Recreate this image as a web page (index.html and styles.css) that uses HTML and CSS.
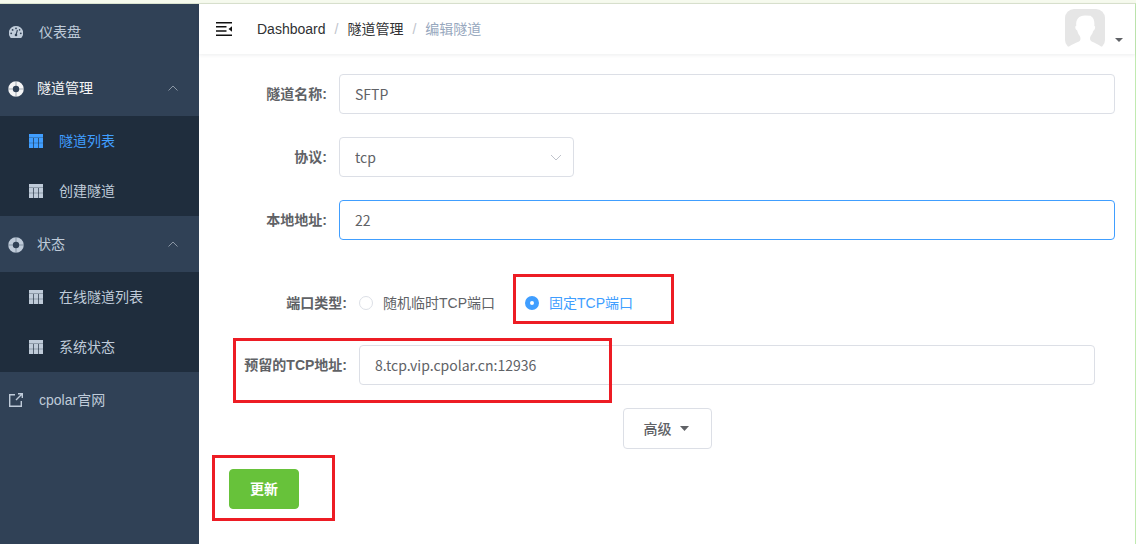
FILE: index.html
```html
<!DOCTYPE html>
<html lang="zh-CN">
<head>
<meta charset="utf-8">
<meta name="viewport" content="width=device-width, initial-scale=1">
<title>编辑隧道</title>
<link rel="stylesheet" href="styles.css">
</head>
<body>
<svg class="sprite" aria-hidden="true">
  <symbol id="table" viewBox="0 0 14 14">
    <path fill="currentColor" d="M0 0h14v14H0z"/>
    <path fill="#1f2d3d" fill-opacity=".3" d="M0 3h14v1H0zM0 8.500h14v1H0z"/>
    <path fill="#1f2d3d" fill-opacity=".65" d="M4 4h1v10H4zM9 4h1v10H9z"/>
  </symbol>
  <symbol id="ring" viewBox="0 0 16 16">
    <circle cx="8" cy="8" r="5.500" fill="none" stroke="currentColor" stroke-width="4.600"/>
    <path d="M8 0v5M8 11v5M0 8h5M11 8h5" stroke="#304156" stroke-opacity=".4"/>
  </symbol>
  <symbol id="chevron" viewBox="0 0 10 6">
    <path d="M.5 5.500 5 1l4.500 4.500" fill="none" stroke="currentColor"/>
  </symbol>
</svg>
<div class="app">
  <nav class="sidebar">
    <a class="item" href="#">
      <svg class="icon-small" viewBox="0 0 14 12" aria-hidden="true">
        <path fill="currentColor" d="M7 0a7 7 0 0 0-6.200 10.600Q1.200 12 2 12h10q.8 0 1.200-1.400A7 7 0 0 0 7 0z"/>
        <g fill="#304156"><circle cx="7" cy="2.300" r=".9"/><circle cx="3.600" cy="3.900" r=".9"/><circle cx="2.200" cy="7.300" r=".9"/><circle cx="11.800" cy="7.300" r=".9"/><circle cx="10.600" cy="3.900" r=".8"/><circle cx="7" cy="9" r="1.300"/></g>
        <path d="M7 9 8.400 4" stroke="#304156" stroke-width="1.100"/>
      </svg>
      <span>仪表盘</span>
    </a>
    <button class="item open" type="button">
      <svg class="icon" aria-hidden="true"><use href="#ring"/></svg>
      <span>隧道管理</span>
      <svg class="arrow" aria-hidden="true"><use href="#chevron"/></svg>
    </button>
    <div class="submenu">
      <a class="subitem active" href="#"><svg class="icon-table" aria-hidden="true"><use href="#table"/></svg><span>隧道列表</span></a>
      <a class="subitem" href="#"><svg class="icon-table" aria-hidden="true"><use href="#table"/></svg><span>创建隧道</span></a>
    </div>
    <button class="item" type="button">
      <svg class="icon" aria-hidden="true"><use href="#ring"/></svg>
      <span>状态</span>
      <svg class="arrow" aria-hidden="true"><use href="#chevron"/></svg>
    </button>
    <div class="submenu">
      <a class="subitem" href="#"><svg class="icon-table" aria-hidden="true"><use href="#table"/></svg><span>在线隧道列表</span></a>
      <a class="subitem" href="#"><svg class="icon-table" aria-hidden="true"><use href="#table"/></svg><span>系统状态</span></a>
    </div>
    <a class="item" href="#">
      <svg class="icon-small icon-link" viewBox="0 0 14 14" fill="none" stroke="currentColor" stroke-width="1.400" aria-hidden="true">
        <path d="M6 1.700H.7v11.600h11.600V8M7 7l5.500-5.500M9 .7h4.300V5"/>
      </svg>
      <span>cpolar官网</span>
    </a>
  </nav>
  <div class="main">
    <header class="navbar">
      <button class="toggle" type="button" aria-label="收起菜单">
        <svg viewBox="0 0 16 14" aria-hidden="true"><path fill="currentColor" d="M0 0h16v1.500H0zM0 4h10.500v1.500H0zM0 8.200h10.500v1.500H0zM0 12.500h16V14H0zM16 4.200v5.600L12.500 7z"/></svg>
      </button>
      <nav class="breadcrumb">
        <a href="#">Dashboard</a><span class="sep">/</span><a href="#">隧道管理</a><span class="sep">/</span><span class="current">编辑隧道</span>
      </nav>
      <button class="user" type="button" aria-label="用户菜单">
        <svg class="avatar" viewBox="0 0 40 40" aria-hidden="true">
          <rect width="40" height="40" rx="9" fill="#e6e6e6"/>
          <path fill="#fff" d="M0 40v-2l4-.5c3-2.500 7-3.500 10-5 1.800-1 1.900-3.500.8-5.500-1.300-1.500-2.100-3.400-2.600-5.500-1.500-.6-2.200-3-1.800-4.300l.9-.5C10.500 10.500 14 6.500 20 6.500l5.500.3 2.300 2c1.500 2 1.800 5 1.500 8l.8.6c.3 1.800-.5 3.600-1.700 4.300-.5 2-1.400 3.800-2.700 5.300-1.200 2-.8 4.500 1 5.500 3 1.500 6.500 2.500 9.300 5l4 .5v2z"/>
        </svg>
        <svg class="caret" viewBox="0 0 8 4" aria-hidden="true"><path fill="currentColor" d="M0 0h8L4 4z"/></svg>
      </button>
    </header>
    <form class="form">
      <div class="row">
        <label for="name">隧道名称:</label>
        <input class="control" id="name" type="text" value="SFTP">
      </div>
      <div class="row">
        <label for="protocol">协议:</label>
        <div class="select">
          <select class="control" id="protocol"><option>tcp</option></select>
          <svg aria-hidden="true" viewBox="0 0 12 7"><path d="m1 1 5 5 5-5" fill="none" stroke="currentColor"/></svg>
        </div>
      </div>
      <div class="row">
        <label for="local">本地地址:</label>
        <input class="control focused" id="local" type="text" value="22">
      </div>
      <div class="nested">
        <div class="row" role="radiogroup" aria-labelledby="port-type">
          <span class="label" id="port-type">端口类型:</span>
          <label class="radio"><input type="radio" name="port"><span>随机临时TCP端口</span></label>
          <label class="radio marked mark-port"><input type="radio" name="port" checked><span>固定TCP端口</span></label>
        </div>
        <div class="row marked mark-address">
          <label for="address">预留的TCP地址:</label>
          <input class="control" id="address" type="text" value="8.tcp.vip.cpolar.cn:12936">
        </div>
      </div>
      <button class="button advanced" type="button">高级<svg class="caret" viewBox="0 0 9 5" aria-hidden="true"><path fill="currentColor" d="M0 0h9L4.500 5z"/></svg></button>
      <div class="actions marked mark-update"><button class="button update" type="button">更新</button></div>
    </form>
  </div>
</div>
</body>
</html>
```
FILE: styles.css
```css
*,
*::before,
*::after {
  box-sizing: border-box;
}

body {
  margin: 0;
  font: 14px/20px "Liberation Sans", "Noto Sans CJK SC", sans-serif;
  color: #606266;
  background: #fff;
}

body::before {
  content: "";
  display: block;
  height: 3px;
  background: #f6faee;
}

button {
  padding: 0;
  border: 0;
  background: none;
  font: inherit;
  color: inherit;
}

a {
  color: inherit;
  text-decoration: none;
}

svg {
  display: block;
  flex: none;
}

.sprite {
  display: none;
}

.app {
  display: flex;
  min-height: calc(100vh - 3px);
  border-top: 1px solid #dbe3d0;
  border-right: 1px solid #c0eab0;
}

/* Sidebar */
.sidebar {
  flex: none;
  width: 199px;
  background: #304156;
  color: #bfcbd9;
}

.item {
  display: flex;
  align-items: center;
  width: 100%;
  height: 56px;
  padding: 0 21px 0 8px;
  text-align: left;
}

.open {
  color: #f4f4f5;
}

.icon {
  width: 16px;
  height: 16px;
  margin: 2px 13px 0 0;
}

.icon-small {
  width: 14px;
  height: 12px;
  margin: 0 16px 0 1px;
}

.icon-link {
  height: 14px;
}

.arrow {
  width: 10px;
  height: 6px;
  margin-left: auto;
  color: #8a96a4;
}

.submenu {
  background: #1f2d3d;
}

.subitem {
  display: flex;
  align-items: center;
  gap: 16px;
  height: 50px;
  padding-left: 29px;
}

.active {
  color: #409eff;
}

.icon-table {
  width: 14px;
  height: 14px;
}

/* Header */
.main {
  flex: 1;
  min-width: 0;
}

.navbar {
  display: flex;
  align-items: center;
  height: 50px;
  padding: 0 12px 0 17px;
  box-shadow: 0 1px 4px rgba(0, 21, 41, 0.08);
}

.toggle svg {
  width: 16px;
  height: 14px;
  color: #111;
}

.breadcrumb {
  display: flex;
  margin-left: 25px;
  color: #303133;
}

.sep {
  margin: 0 9px;
  color: #c0c4cc;
}

.current {
  color: #97a8be;
}

.user {
  display: flex;
  align-items: flex-end;
  gap: 10px;
  margin-left: auto;
}

.avatar {
  width: 40px;
  height: 40px;
}

.caret {
  width: 8px;
  height: 4px;
}

.user .caret {
  margin-bottom: 7px;
}

/* Form */
.form {
  display: flex;
  flex-direction: column;
  gap: 23px;
  padding: 20px;
}

.row {
  display: flex;
  align-items: center;
  height: 40px;
}

.row > label:first-child,
.label {
  flex: none;
  width: 120px;
  padding-right: 12px;
  font-weight: 700;
  text-align: right;
}

.control {
  flex: 1;
  min-width: 0;
  width: 100%;
  height: 40px;
  padding: 0 15px;
  border: 1px solid #dcdfe6;
  border-radius: 4px;
  outline: 0;
  background: #fff;
  color: #606266;
  font: 14px/20px "Noto Sans CJK SC", sans-serif;
}

.focused {
  border-color: #409eff;
}

.select {
  display: grid;
  align-items: center;
  width: 235px;
}

.select > * {
  grid-area: 1 / 1;
}

.select select {
  appearance: none;
}

.select svg {
  justify-self: end;
  width: 12px;
  height: 7px;
  margin-right: 12px;
  color: #c0c4cc;
  pointer-events: none;
}

.nested {
  display: flex;
  flex-direction: column;
  gap: 22px;
  padding: 20px 20px 0;
}

.radio {
  display: flex;
  align-items: center;
  gap: 10px;
  margin-right: 30px;
}

.radio input {
  appearance: none;
  width: 14px;
  height: 14px;
  margin: 0;
  border: 1px solid #dcdfe6;
  border-radius: 50%;
}

.radio input:checked {
  border: 5px solid #409eff;
}

.radio input:checked + span {
  color: #409eff;
}

.button {
  height: 40px;
  padding: 0 20px;
  border: 1px solid #dcdfe6;
  border-radius: 4px;
  font-weight: 500;
}

.advanced {
  display: flex;
  align-items: center;
  align-self: center;
  gap: 8px;
  height: 41px;
}

.advanced .caret {
  width: 9px;
  height: 5px;
  margin-right: 2px;
}

.actions {
  align-self: flex-start;
  margin: -3px 0 0 10px;
}

.update {
  border-color: #67c23a;
  background: #67c23a;
  color: #fff;
  font-weight: 700;
}

/* Red highlight frames laid over the controls */
.marked {
  position: relative;
}

.marked::after {
  content: "";
  position: absolute;
  border: 3px solid #ed1c24;
  pointer-events: none;
}

.mark-port::after {
  inset: -19px -41px -11px -12px;
}

.mark-address::after {
  top: -7px;
  left: -6px;
  width: 379px;
  height: 65px;
}

.mark-update::after {
  inset: -14px -36px -12px -17px;
}
```
